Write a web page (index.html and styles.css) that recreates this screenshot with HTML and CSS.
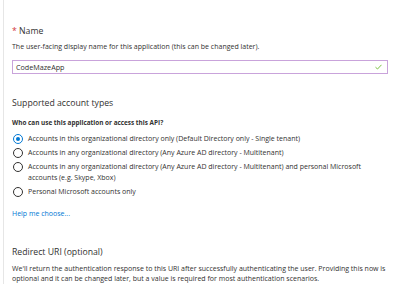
FILE: index.html
```html
<!DOCTYPE html>
<html>
<head>
<meta charset="utf-8">
<link rel="stylesheet" href="styles.css">
</head>
<body>
<div class="page">
  <div class="title"><span class="req">*</span> Name</div>
  <div class="desc">The user-facing display name for this application (this can be changed later).</div>
  <div class="input">
    <span class="value">CodeMazeApp</span>
    <svg class="check" width="7" height="6" viewBox="0 0 7 6"><path d="M0.5 3.2 L2.5 5 L6.5 0.8" fill="none" stroke="#7cc243" stroke-width="1"/></svg>
  </div>

  <div class="title h2">Supported account types</div>
  <div class="question">Who can use this application or access this API?</div>
  <div class="radios">
    <div class="radio"><span class="circle on"></span><span class="label">Accounts in this organizational directory only (Default Directory only - Single tenant)</span></div>
    <div class="radio"><span class="circle"></span><span class="label">Accounts in any organizational directory (Any Azure AD directory - Multitenant)</span></div>
    <div class="radio"><span class="circle"></span><span class="label">Accounts in any organizational directory (Any Azure AD directory - Multitenant) and personal Microsoft accounts (e.g. Skype, Xbox)</span></div>
    <div class="radio"><span class="circle"></span><span class="label">Personal Microsoft accounts only</span></div>
  </div>
  <a class="help" href="#">Help me choose...</a>

  <div class="title h3">Redirect URI (optional)</div>
  <div class="para">We'll return the authentication response to this URI after successfully authenticating the user. Providing this now is optional and it can be changed later, but a value is required for most authentication scenarios.</div>
</div>
</body>
</html>
```

FILE: styles.css
```css
html, body {
  margin: 0;
  padding: 0;
  background: #ffffff;
}
body {
  font-family: "Open Sans", "Noto Sans", sans-serif;
  color: #323130;
  width: 400px;
  height: 284px;
  overflow: hidden;
}
.page {
  margin-left: 3px;
  border-left: 1px solid #e6e6e6;
  padding: 24px 0 0 8px;
  height: 284px;
  box-sizing: border-box;
}
.title {
  font-size: 8.7px;
  line-height: 14px;
  color: #323130;
}
.req {
  color: #d13438;
}
.desc {
  margin-top: 4px;
  font-size: 7px;
  line-height: 10px;
}
.input {
  margin-top: 8px;
  height: 14px;
  border: 1px solid #c9a3db;
  box-sizing: border-box;
  display: flex;
  align-items: center;
  justify-content: space-between;
  padding: 0 5px 0 3px;
  width: 376px;
}
.value {
  font-size: 7.2px;
  line-height: 10px;
}
.check {
  display: block;
}
.h2 {
  margin-top: 22px;
}
.question {
  margin-top: 8px;
  font-size: 6.4px;
  line-height: 10px;
  font-weight: 700;
}
.radios {
  margin-top: 5px;
  display: flex;
  flex-direction: column;
  gap: 3px;
}
.radio {
  display: flex;
  align-items: flex-start;
  gap: 5px;
  padding-left: 1px;
}
.circle {
  flex: none;
  width: 10px;
  height: 10px;
  border: 1px solid #323130;
  border-radius: 50%;
  box-sizing: border-box;
  margin-top: 0.5px;
  position: relative;
}
.circle.on {
  border-color: #0078d4;
}
.circle.on::after {
  content: "";
  position: absolute;
  left: 2px;
  top: 2px;
  width: 4px;
  height: 4px;
  border-radius: 50%;
  background: #0078d4;
}
.label {
  font-size: 7px;
  line-height: 11px;
  width: 345px;
}
.help {
  display: block;
  margin-top: 12px;
  font-size: 7px;
  line-height: 10px;
  color: #0078d4;
  text-decoration: none;
}
.h3 {
  margin-top: 26px;
}
.para {
  margin-top: 5px;
  font-size: 7px;
  line-height: 10px;
}
```
